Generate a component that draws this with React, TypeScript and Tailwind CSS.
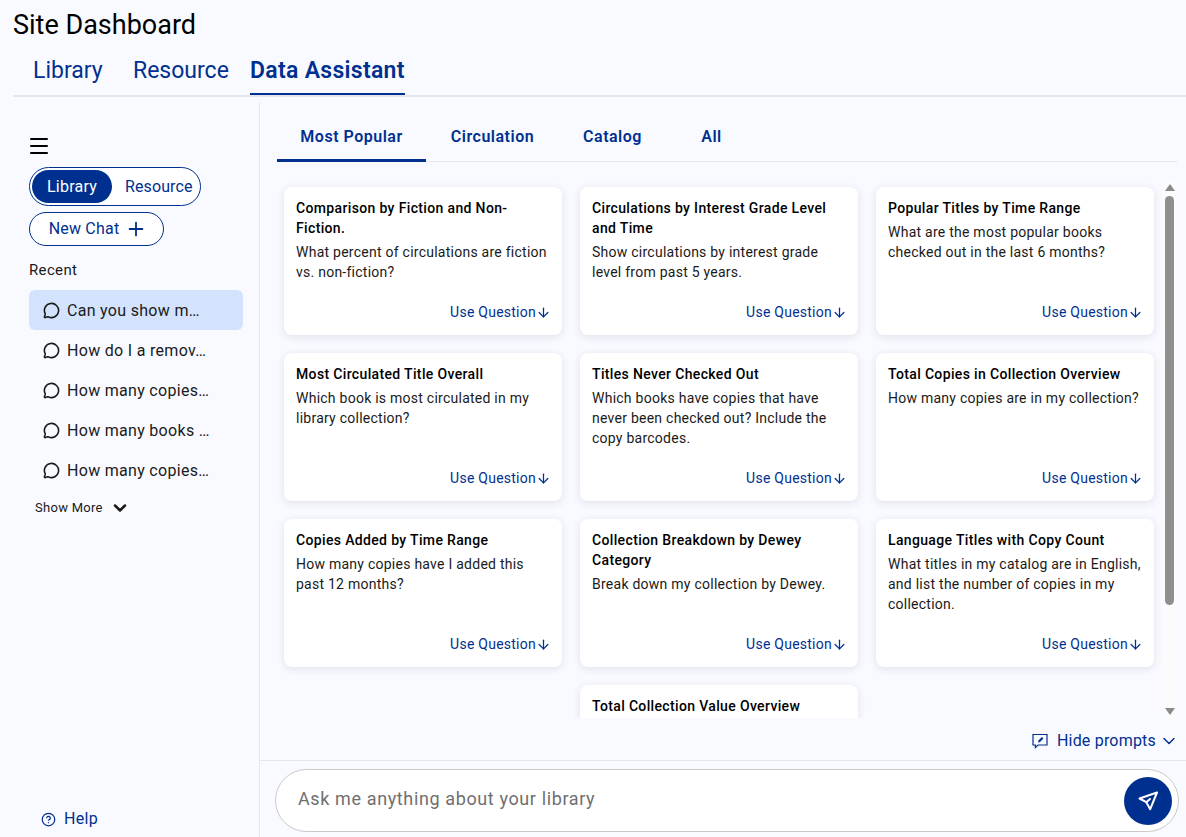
import { Menu, Plus, ArrowDown, ChevronDown, CircleHelp, MessageCircle } from "lucide-react";

const blue = "text-[#00308f]";

const cards = [
  { title: "Comparison by Fiction and Non-Fiction.", body: "What percent of circulations are fiction vs. non-fiction?" },
  { title: "Circulations by Interest Grade Level and Time", body: "Show circulations by interest grade level from past 5 years." },
  { title: "Popular Titles by Time Range", body: "What are the most popular books checked out in the last 6 months?" },
  { title: "Most Circulated Title Overall", body: "Which book is most circulated in my library collection?" },
  { title: "Titles Never Checked Out", body: "Which books have copies that have never been checked out? Include the copy barcodes." },
  { title: "Total Copies in Collection Overview", body: "How many copies are in my collection?" },
  { title: "Copies Added by Time Range", body: "How many copies have I added this past 12 months?" },
  { title: "Collection Breakdown by Dewey Category", body: "Break down my collection by Dewey." },
  { title: "Language Titles with Copy Count", body: "What titles in my catalog are in English, and list the number of copies in my collection." },
];

const chats = ["Can you show m…", "How do I a remov…", "How many copies…", "How many books …", "How many copies…"];

const Card = ({ title, body }: { title: string; body: string }) => (
  <div className="flex h-[148px] flex-col rounded-lg bg-white px-[12px] pt-[11px] pb-[13px] shadow-[0_2px_8px_rgba(40,50,90,0.12)]">
    <h3 className="text-[14px] leading-5 font-medium tracking-[0.35px] text-black">{title}</h3>
    <p className="mt-1 text-[14px] leading-5 tracking-[0.25px] text-[#1a1a1a]">{body}</p>
    <button className={`mt-auto -mr-[1px] flex items-center justify-end text-[14px] leading-5 tracking-[0.25px] ${blue}`}>
      Use Question
      <ArrowDown className="h-[15px] w-[15px]" strokeWidth={2} />
    </button>
  </div>
);

const App = () => {
  return (
    <div className="flex h-[837px] flex-col overflow-hidden bg-[#f9faff] font-['Roboto',sans-serif]">
      {/* Header */}
      <header className="ml-[13px] h-[97px] shrink-0 border-b-2 border-[#e4e6ee]">
        <h1 className="pt-[9px] text-[27px] leading-8 text-black">Site Dashboard</h1>
        <nav className={`mt-[15px] ml-[20px] flex items-start text-[23px] leading-[30px] ${blue}`}>
          <a className="w-[100px]">Library</a>
          <a className="w-[117px]">Resource</a>
          <a className="h-[39px] border-b-2 border-[#00308f] font-semibold tracking-[0.3px]">Data Assistant</a>
        </nav>
      </header>

      <div className="flex min-h-0 flex-1 pt-[6px]">
        {/* Sidebar */}
        <aside className="flex w-[260px] shrink-0 flex-col border-r border-[#e4e6ee] pt-[31px] pr-[16px] pb-[8px] pl-[29px]">
          <Menu className="-ml-[2px] h-[24px] w-[24px] text-black" strokeWidth={2} />
          <div className={`mt-[9px] flex h-[39px] w-[172px] items-center rounded-full border border-[#00308f] bg-white p-[2px] text-[16px] tracking-[0.1px] ${blue}`}>
            <span className="flex h-[33px] w-[80px] items-center justify-center rounded-full bg-[#00308f] tracking-[0.25px] text-white">Library</span>
            <span className="ml-[13px]">Resource</span>
          </div>
          <button className={`mt-[6px] flex h-[34px] w-[135px] items-center justify-center gap-[6px] rounded-full border border-[#00308f] bg-white pl-[3px] text-[16px] tracking-[0.2px] ${blue}`}>
            New Chat
            <Plus className="h-[22px] w-[22px]" strokeWidth={2} />
          </button>
          <div className="mt-[14px] text-[15px] leading-5 tracking-[0.35px] text-[#1a1a1a]">Recent</div>
          <ul className="mt-[10px] flex flex-col">
            {chats.map((c, i) => (
              <li
                key={i}
                className={`flex h-[40px] items-center gap-[7px] rounded-md pt-[1px] pl-[14px] text-[16px] tracking-[0.3px] text-[#1a1a1a] ${i === 0 ? "bg-[#d3e3fd]" : ""}`}
              >
                <MessageCircle className="h-[17px] w-[17px] shrink-0" strokeWidth={2.25} />
                <span>{c}</span>
              </li>
            ))}
          </ul>
          <button className="mt-[8px] ml-[6px] flex items-center gap-[7px] text-[13px] leading-5 tracking-[0.28px] text-[#1a1a1a]">
            Show More
            <ChevronDown className="h-[20px] w-[20px]" strokeWidth={3} />
          </button>
          <a className="mt-auto mb-[-2px] ml-[12px] flex items-center gap-[8px] text-[16px] tracking-[0.3px] text-[#00308f]">
            <CircleHelp className="h-[15px] w-[15px]" strokeWidth={2} />
            Help
          </a>
        </aside>

        {/* Main */}
        <main className="flex min-w-0 flex-1 flex-col">
          <div className="mr-[9px] ml-[17px] flex h-[59px] shrink-0 items-end border-b border-[#e4e6ee]">
            {[
              ["Most Popular", "w-[149px] border-b-[3px] border-[#00308f] -mb-px"],
              ["Circulation", "w-[133px]"],
              ["Catalog", "w-[107px]"],
              ["All", "w-[91px]"],
            ].map(([label, cls]) => (
              <button key={label} className={`h-[50px] pt-[2px] text-[16px] font-semibold tracking-[0.5px] ${blue} ${cls}`}>
                {label}
              </button>
            ))}
          </div>

          <div className="mr-[9px] flex h-[556px] shrink-0">
            <div className="min-w-0 flex-1 overflow-hidden pt-[25px] pr-[8px] pl-[24px]">
              <div className="grid grid-cols-3 gap-x-[18px] gap-y-[18px]">
                {cards.map((c) => (
                  <Card key={c.title} {...c} />
                ))}
                <div className="col-start-2 h-[148px] rounded-lg bg-white px-[12px] pt-[11px] shadow-[0_2px_8px_rgba(40,50,90,0.12)]">
                  <h3 className="text-[14px] leading-5 font-medium tracking-[0.35px] text-black">Total Collection Value Overview</h3>
                </div>
              </div>
            </div>
            {/* Scrollbar */}
            <div className="mt-[18px] flex w-[15px] shrink-0 flex-col items-center bg-[#fbfbfd] pt-[4px]">
              <div className="h-0 w-0 border-x-[5px] border-b-[7px] border-x-transparent border-b-[#8a8a8a]" />
              <div className="mt-[5px] h-[409px] w-[9px] rounded-full bg-[#8f8f8f]" />
              <div className="mt-auto mb-[3px] h-0 w-0 border-x-[5px] border-t-[7px] border-x-transparent border-t-[#8a8a8a]" />
            </div>
          </div>

          <div className={`mr-[9px] flex h-[42px] shrink-0 items-center justify-end pt-[3px] text-[16px] tracking-[0.2px] ${blue}`}>
            <svg viewBox="0 0 18 18" className="mr-[8px] h-[18px] w-[18px]" fill="none" stroke="currentColor" strokeWidth="1.2">
              <path d="M2 2.5h14v10.5H7l-2.6 2.6V13H2z" />
              <path d="M7 10.4l.5-2 3.4-3.4 1.5 1.5-3.4 3.4z" fill="currentColor" stroke="none" />
            </svg>
            Hide prompts
            <ChevronDown className="-mr-[2px] ml-[3px] h-[20px] w-[20px]" strokeWidth={1.75} />
          </div>

          <div className="flex-1 border-t border-[#e4e6ee] pt-[8px] pr-[7px] pl-[15px]">
            <div className="flex h-[63px] items-center rounded-full border border-[#c9c9c9] bg-white pr-[6px] pl-[22px]">
              <span className="flex-1 pb-[4px] text-[18px] tracking-[0.62px] text-[#6f6f6f]">Ask me anything about your library</span>
              <button className="flex h-[48px] w-[48px] items-center justify-center rounded-full bg-[#00308f] text-white">
                <svg viewBox="0 0 24 24" className="h-[24px] w-[24px]" fill="none" stroke="currentColor" strokeWidth="2" strokeLinejoin="round" strokeLinecap="round">
                  <path d="M21 3.5 3.5 9.5l6.8 3.7 3.9 7z" />
                  <path d="M10.3 13.2 14 10" />
                </svg>
              </button>
            </div>
          </div>
        </main>
      </div>
    </div>
  );
};

export default App;
